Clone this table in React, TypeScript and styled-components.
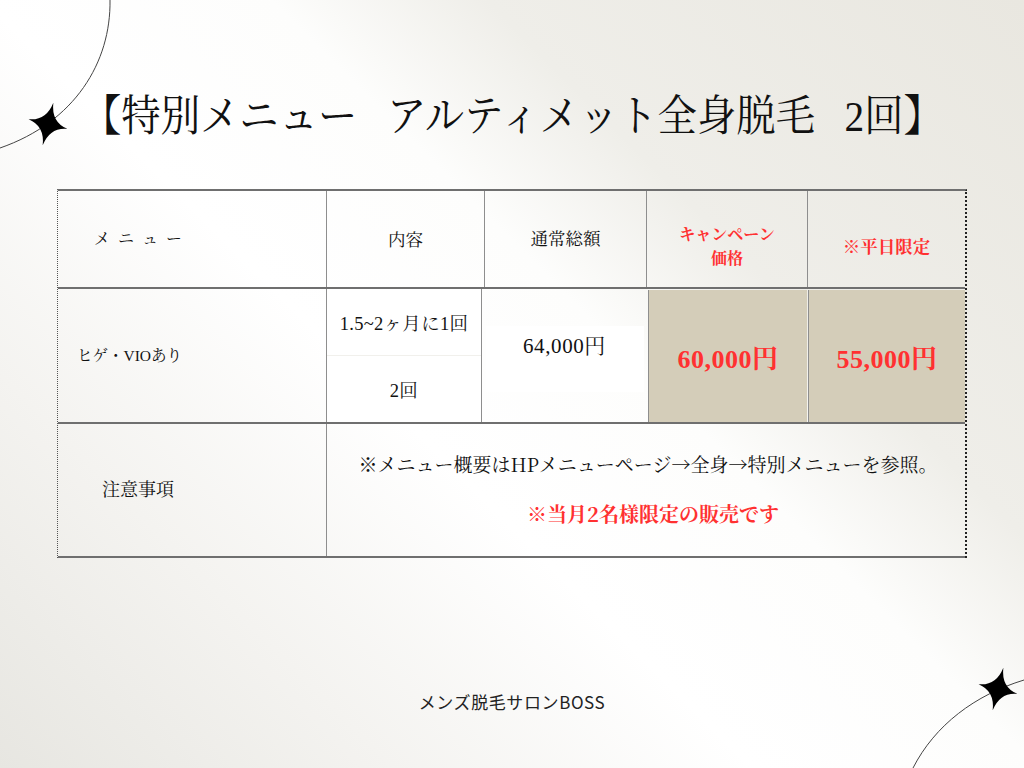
import React from "react";
import styled, { createGlobalStyle } from "styled-components";

const Global = createGlobalStyle`
  html, body { margin: 0; padding: 0; }
  body {
    font-family: "Liberation Serif", "Noto Serif CJK JP", "Noto Sans CJK JP", serif;
    color: #111;
  }
  * { box-sizing: border-box; }
`;

const Page = styled.div`
  position: relative;
  width: 1024px;
  height: 768px;
  overflow: hidden;
  background: linear-gradient(
    45deg,
    #e7e6e1 0%,
    #f4f3f0 22%,
    #ffffff 42%,
    #fdfdfc 58%,
    #efeee9 70%,
    #e9e7e0 100%
  );
  display: flex;
  flex-direction: column;
  align-items: center;
`;

const Title = styled.h1`
  margin: 91px 0 0;
  height: 52px;
  font-size: 43px;
  line-height: 52px;
  font-weight: 400;
  white-space: pre;
  transform: scaleX(0.915);
  color: #111;
`;

const Table = styled.div`
  margin-top: 46px;
  width: 910px;
  border-top: 2px solid #6f6f6f;
  border-left: 1px dotted #555;
  border-right: 2px dotted #222;
`;

const Row = styled.div<{ $cols: string; $h: number }>`
  display: grid;
  grid-template-columns: ${(p) => p.$cols};
  height: ${(p) => p.$h}px;
  border-bottom: 2px solid #6f6f6f;
`;

const Cell = styled.div<{ $align?: string; $padTop?: number; $padLeft?: number }>`
  display: flex;
  align-items: center;
  justify-content: ${(p) => p.$align || "center"};
  padding-top: ${(p) => p.$padTop || 0}px;
  padding-left: ${(p) => p.$padLeft || 0}px;
  & + & {
    border-left: 1px solid #8e8e8e;
  }
`;

const HeadText = styled.span<{ $spacing?: number; $size?: number }>`
  font-size: ${(p) => p.$size || 17.5}px;
  line-height: 24px;
  letter-spacing: ${(p) => p.$spacing || 0}px;
  text-align: center;
`;

const RedHead = styled.span<{ $size?: number }>`
  font-size: ${(p) => p.$size || 16}px;
  line-height: 24px;
  font-weight: 700;
  color: #ff3131;
  text-align: center;
`;

const SmallText = styled.span<{ $size?: number }>`
  font-size: ${(p) => p.$size || 15.5}px;
  line-height: 20px;
`;

const SubStack = styled.div`
  display: flex;
  flex-direction: column;
  align-self: stretch;
  width: 100%;
  background: #fff;
`;

const SubCell = styled.div<{ $divider?: boolean }>`
  flex: 1;
  display: flex;
  align-items: center;
  justify-content: center;
  font-size: 18.5px;
  letter-spacing: 0.3px;
  border-top: ${(p) => (p.$divider ? "1px solid #f1f0ec" : "none")};
`;

const PriceCell = styled(Cell)`
  align-items: flex-start;
  padding-top: 37px;
`;

const WhiteBox = styled.div`
  width: 158px;
  height: 66px;
  background: #fff;
  display: flex;
  justify-content: center;
  padding-top: 8px;
  font-size: 21px;
  line-height: 24px;
  letter-spacing: 0.6px;
`;

const TanCell = styled(Cell)`
  background: #d4cdb9;
  margin: 1px 0 0 1px;
`;

const BigRed = styled.span`
  font-size: 26px;
  letter-spacing: 0.5px;
  font-weight: 700;
  color: #ff3131;
`;

const NoteCell = styled(Cell)`
  flex-direction: column;
  gap: 26px;
  padding-bottom: 2px;
`;

const NoteLine = styled.span<{ $red?: boolean }>`
  font-family: "Noto Serif CJK JP", "Liberation Serif", serif;
  font-size: ${(p) => (p.$red ? 20 : 19)}px;
  line-height: 24px;
  font-weight: ${(p) => (p.$red ? 700 : 400)};
  color: ${(p) => (p.$red ? "#ff3131" : "#111")};
  padding-left: ${(p) => (p.$red ? 14 : 4)}px;
`;

const Footer = styled.div`
  margin-top: 133px;
  font-family: "Noto Sans CJK JP", "Noto Sans", sans-serif;
  font-size: 17px;
  letter-spacing: 0.6px;
  line-height: 22px;
  color: #222;
`;

const Deco = styled.svg<{ $corner: "tl" | "br" }>`
  position: absolute;
  ${(p) => (p.$corner === "tl" ? "top: 0; left: 0;" : "bottom: 0; right: 0;")}
  pointer-events: none;
`;

const sparkle =
  "M0,-22 Q2.6,-2.6 20,0 Q2.6,2.6 0,22 Q-2.6,2.6 -20,0 Q-2.6,-2.6 0,-22 Z";

export default function App() {
  return (
    <Page>
      <Global />
      <Deco $corner="tl" width="140" height="170" viewBox="0 0 140 170">
        <path d="M110,0 C111,62 75,122 0,148" fill="none" stroke="#444" strokeWidth="1" />
        <path d={sparkle} transform="translate(48,124) rotate(14)" fill="#000" />
      </Deco>
      <Deco $corner="br" width="124" height="104" viewBox="0 0 124 104">
        <path d="M13,104 C35,61 75,31 124,16" fill="none" stroke="#444" strokeWidth="1" />
        <path d={sparkle} transform="translate(98,25) rotate(14)" fill="#000" />
      </Deco>

      <Title>{"【特別メニュー   アルティメット全身脱毛   2回】"}</Title>

      <Table>
        <Row $cols="268px 158px 162px 161px 158px" $h={98}>
          <Cell $align="flex-start" $padLeft={36}>
            <HeadText $spacing={8} $size={16}>メニュー</HeadText>
          </Cell>
          <Cell $padTop={2}>
            <HeadText>内容</HeadText>
          </Cell>
          <Cell>
            <HeadText>通常総額</HeadText>
          </Cell>
          <Cell $padTop={16}>
            <RedHead>
              キャンペーン
              <br />
              価格
            </RedHead>
          </Cell>
          <Cell $padTop={16}>
            <RedHead $size={17.5}>※平日限定</RedHead>
          </Cell>
        </Row>

        <Row $cols="268px 155px 166px 160px 158px" $h={135}>
          <Cell $align="flex-start" $padLeft={19}>
            <SmallText>ヒゲ・VIOあり</SmallText>
          </Cell>
          <Cell>
            <SubStack>
              <SubCell>1.5~2ヶ月に1回</SubCell>
              <SubCell $divider>2回</SubCell>
            </SubStack>
          </Cell>
          <PriceCell>
            <WhiteBox>64,000円</WhiteBox>
          </PriceCell>
          <TanCell>
            <BigRed>60,000円</BigRed>
          </TanCell>
          <TanCell>
            <BigRed>55,000円</BigRed>
          </TanCell>
        </Row>

        <Row $cols="268px 639px" $h={134}>
          <Cell $align="flex-start" $padLeft={44}>
            <SmallText $size={18}>注意事項</SmallText>
          </Cell>
          <NoteCell>
            <NoteLine>※メニュー概要はHPメニューページ→全身→特別メニューを参照。</NoteLine>
            <NoteLine $red>※当月2名様限定の販売です</NoteLine>
          </NoteCell>
        </Row>
      </Table>

      <Footer>メンズ脱毛サロンBOSS</Footer>
    </Page>
  );
}
